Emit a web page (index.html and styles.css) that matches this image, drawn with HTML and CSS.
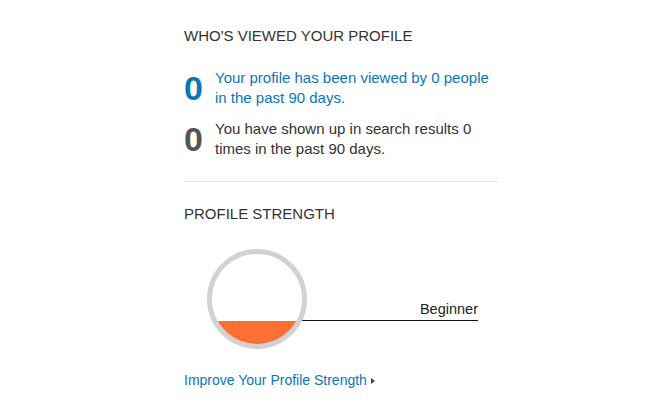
FILE: index.html
```html
<!DOCTYPE html>
<html>
<head>
    <meta charset="utf-8">
    <title>Profile</title>
    <link rel="stylesheet" href="styles.css">
</head>
<body>
<div class="panel">
    <div class="section-title">WHO'S VIEWED YOUR PROFILE</div>
    <div class="stat stat-views">
        <div class="stat-num">0</div>
        <a href="#" class="stat-text">Your profile has been viewed by 0 people in the past 90 days.</a>
    </div>
    <div class="stat stat-search">
        <div class="stat-num">0</div>
        <div class="stat-text">You have shown up in search results 0 times in the past 90 days.</div>
    </div>

    <hr class="divider">

    <div class="section-title">PROFILE STRENGTH</div>
    <div class="meter">
        <div class="meter-ring">
            <div class="meter-inner">
                <div class="meter-fill"></div>
            </div>
        </div>
        <div class="meter-label">Beginner</div>
    </div>
    <a href="#" class="improve">Improve Your Profile Strength<span class="arrow"></span></a>
</div>
</body>
</html>
```

FILE: styles.css
```css
body {
    margin: 0;
    font-family: "Liberation Sans", Arial, sans-serif;
    color: #333;
    background: #fff;
}

.panel {
    width: 315px;
    margin-left: 184px;
    padding-top: 27px;
}

.section-title {
    font-size: 15px;
    line-height: 18px;
    color: #333;
}

.stat {
    display: flex;
    align-items: flex-start;
}
.stat-views {
    margin-top: 23px;
}
.stat-search {
    margin-top: 11px;
}
.stat-num {
    width: 31px;
    flex: none;
    font-size: 34px;
    font-weight: bold;
    line-height: 40px;
    color: #555;
}
.stat-views .stat-num {
    color: #0a76b8;
}
.stat-text {
    font-size: 15px;
    line-height: 20px;
    color: #333;
    text-decoration: none;
}
a.stat-text {
    color: #0a76b8;
}

.divider {
    border: none;
    border-top: 1px solid #e3e3e3;
    margin: 22px 0 23px 0;
}

.meter {
    display: flex;
    align-items: flex-start;
    margin: 26px 0 0 23px;
}
.meter-ring {
    position: relative;
    z-index: 1;
    width: 90px;
    height: 90px;
    border: 5px solid #d2d2d2;
    border-radius: 50%;
    background: #fff;
    flex: none;
}
.meter-inner {
    width: 90px;
    height: 90px;
    border-radius: 50%;
    overflow: hidden;
    display: flex;
    flex-direction: column;
    justify-content: flex-end;
}
.meter-fill {
    height: 23px;
    background: #ff6f33;
}
.meter-label {
    width: 179px;
    margin: 52px 0 0 -8px;
    padding-bottom: 2px;
    border-bottom: 1px solid #111;
    text-align: right;
    font-size: 14.5px;
    line-height: 17px;
    color: #222;
}

.improve {
    display: inline-block;
    margin-top: 22px;
    font-size: 14px;
    line-height: 18px;
    color: #0a76b8;
    text-decoration: none;
}
.arrow {
    display: inline-block;
    margin-left: 4px;
    vertical-align: 1px;
    border-top: 3px solid transparent;
    border-bottom: 3px solid transparent;
    border-left: 4px solid #2a4a66;
}
```
